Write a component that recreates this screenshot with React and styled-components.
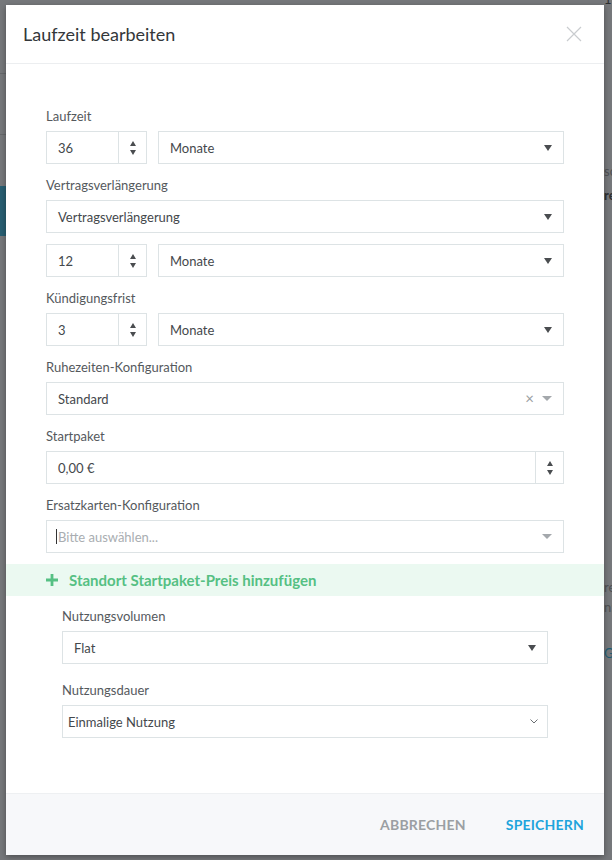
import React from "react";
import styled, { createGlobalStyle } from "styled-components";

const GlobalStyle = createGlobalStyle`
  html, body {
    margin: 0;
    padding: 0;
    height: 100%;
  }
  body {
    font-family: Lato, "Open Sans", Arial, sans-serif;
    background: #76787b;
    overflow: hidden;
  }
`;

const Page = styled.div`
  position: relative;
  width: 612px;
  height: 860px;
  background: #76787b;
  overflow: hidden;
  display: flex;
`;

const SideStrip = styled.div`
  width: 6px;
  display: flex;
  flex-direction: column;
`;

const StripLine = styled.div`
  height: ${(p) => p.h}px;
  border-bottom: 1px solid #66686b;
`;

const StripActive = styled.div`
  height: 50px;
  background: #285f72;
`;

const BackContent = styled.div`
  flex: 1;
  display: flex;
  justify-content: flex-end;
`;

const BackColumn = styled.div`
  width: 8px;
  display: flex;
  flex-direction: column;
  overflow: hidden;
  font-size: 13px;
  color: #4e5053;
  white-space: nowrap;
`;

const BackText = styled.div`
  margin-top: ${(p) => p.mt}px;
  font-weight: ${(p) => (p.bold ? 700 : 400)};
  color: ${(p) => p.color || "#505255"};
  line-height: 16px;
`;

const Modal = styled.div`
  position: absolute;
  top: 5px;
  left: 6px;
  width: 598px;
  height: 850px;
  background: #fff;
  box-shadow: 0 2px 6px rgba(0, 0, 0, 0.35);
  display: flex;
  flex-direction: column;
`;

const Header = styled.div`
  height: 59px;
  border-bottom: 1px solid #eceef0;
  display: flex;
  align-items: center;
  justify-content: space-between;
  padding: 0 22px 0 17px;
  box-sizing: border-box;
`;

const Title = styled.h2`
  margin: 0;
  font-size: 18px;
  font-weight: 400;
  color: #34373a;
`;

const Close = styled.button`
  border: 0;
  background: none;
  padding: 0;
  width: 16px;
  height: 16px;
  display: flex;
  cursor: pointer;
`;

const Body = styled.div`
  flex: 1;
  padding: 42px 40px 0;
  display: flex;
  flex-direction: column;
`;

const Field = styled.div`
  margin-bottom: ${(p) => p.mb ?? 11}px;
`;

const Label = styled.div`
  font-size: 13px;
  line-height: 20px;
  color: #55595d;
  margin-bottom: 5px;
`;

const Row = styled.div`
  display: flex;
  gap: 11px;
  margin-bottom: ${(p) => p.mb ?? 0}px;
`;

const Box = styled.div`
  box-sizing: border-box;
  height: 33px;
  border: 1px solid #dde3e5;
  background: #fff;
  display: flex;
  align-items: center;
  font-size: 13px;
  color: #44484c;
  width: ${(p) => (p.w ? `${p.w}px` : "auto")};
  flex: ${(p) => (p.w ? "none" : 1)};
`;

const Value = styled.div`
  flex: 1;
  padding-left: ${(p) => p.pl ?? 11}px;
  color: ${(p) => (p.placeholder ? "#a9adb1" : "#44484c")};
  display: flex;
  align-items: center;
`;

const Cursor = styled.span`
  display: inline-block;
  width: 1px;
  height: 15px;
  background: #333;
  margin-right: 1px;
`;

const Spinner = styled.div`
  width: 27px;
  height: 100%;
  border-left: 1px solid #dde3e5;
  display: flex;
  flex-direction: column;
  align-items: center;
  justify-content: center;
  gap: 4px;
`;

const Tri = styled.span`
  width: 0;
  height: 0;
  border-left: 3.5px solid transparent;
  border-right: 3.5px solid transparent;
  ${(p) =>
    p.up
      ? "border-bottom: 5px solid #4a4d50;"
      : "border-top: 5px solid #4a4d50;"}
`;

const Caret = styled.span`
  width: 0;
  height: 0;
  margin-right: ${(p) => p.mr ?? 11}px;
  border-left: ${(p) => p.size ?? 4}px solid transparent;
  border-right: ${(p) => p.size ?? 4}px solid transparent;
  border-top: ${(p) => (p.size ? p.size : 6)}px solid ${(p) => p.color || "#4a4d50"};
`;

const ClearX = styled.span`
  color: #9a9ea2;
  font-size: 15px;
  margin-right: 8px;
  line-height: 1;
`;

const Banner = styled.div`
  margin: 0 -40px;
  height: 32px;
  background: #ebf9f1;
  display: flex;
  align-items: center;
  padding-left: 40px;
  gap: 11px;
  font-size: 15px;
  font-weight: 700;
  color: #55c083;
`;

const SubSection = styled.div`
  padding: 10px 16px 0;
`;

const Chevron = styled.svg`
  margin-right: 9px;
`;

const Footer = styled.div`
  height: 61px;
  background: #f7f8fa;
  border-top: 1px solid #eef0f2;
  display: flex;
  align-items: center;
  justify-content: flex-end;
  padding: 0 20px 0 0;
  gap: 40px;
`;

const FooterButton = styled.button`
  border: 0;
  background: none;
  padding: 0;
  font-family: inherit;
  font-size: 14px;
  font-weight: 700;
  letter-spacing: 0.2px;
  color: ${(p) => (p.primary ? "#1ea4dc" : "#9b9fa3")};
  cursor: pointer;
`;

const NumberInput = ({ value, w = 101 }) => (
  <Box w={w}>
    <Value>{value}</Value>
    <Spinner>
      <Tri up />
      <Tri />
    </Spinner>
  </Box>
);

const Select = ({ value }) => (
  <Box>
    <Value>{value}</Value>
    <Caret />
  </Box>
);

export default function App() {
  return (
    <>
      <GlobalStyle />
      <Page>
        <SideStrip>
          <StripLine h={73} />
          <StripLine h={60} />
          <div style={{ height: 51 }} />
          <StripActive />
        </SideStrip>
        <BackContent>
          <BackColumn>
            <BackText mt={-9} color="#2c2e30">1-Gym</BackText>
            <BackText mt={156}>sc</BackText>
            <BackText mt={8} bold color="#2f3133">re</BackText>
            <BackText mt={376}>re</BackText>
            <BackText mt={4}>n:</BackText>
            <BackText mt={30} color="#1f5e74">G</BackText>
          </BackColumn>
        </BackContent>

        <Modal>
          <Header>
            <Title>Laufzeit bearbeiten</Title>
            <Close aria-label="Schließen">
              <svg width="16" height="16" viewBox="0 0 16 16">
                <path d="M1 1 L15 15 M15 1 L1 15" stroke="#c9cccf" strokeWidth="1.2" />
              </svg>
            </Close>
          </Header>

          <Body>
            <Field>
              <Label>Laufzeit</Label>
              <Row>
                <NumberInput value="36" />
                <Select value="Monate" />
              </Row>
            </Field>

            <Field>
              <Label>Vertragsverlängerung</Label>
              <Row mb={11}>
                <Select value="Vertragsverlängerung" />
              </Row>
              <Row>
                <NumberInput value="12" />
                <Select value="Monate" />
              </Row>
            </Field>

            <Field>
              <Label>Kündigungsfrist</Label>
              <Row>
                <NumberInput value="3" />
                <Select value="Monate" />
              </Row>
            </Field>

            <Field>
              <Label>Ruhezeiten-Konfiguration</Label>
              <Box>
                <Value>Standard</Value>
                <ClearX>×</ClearX>
                <Caret size={5} color="#a4a8ac" mr={11} />
              </Box>
            </Field>

            <Field>
              <Label>Startpaket</Label>
              <Box>
                <Value>0,00 €</Value>
                <Spinner>
                  <Tri up />
                  <Tri />
                </Spinner>
              </Box>
            </Field>

            <Field>
              <Label>Ersatzkarten-Konfiguration</Label>
              <Box>
                <Value placeholder="true" pl={9}>
                  <Cursor />
                  Bitte auswählen...
                </Value>
                <Caret size={5} color="#a4a8ac" mr={11} />
              </Box>
            </Field>

            <Banner>
              <svg width="12" height="12" viewBox="0 0 12 12">
                <path d="M6 0 V12 M0 6 H12" stroke="#55c083" strokeWidth="2.8" />
              </svg>
              Standort Startpaket-Preis hinzufügen
            </Banner>

            <SubSection>
              <Field mb={16}>
                <Label>Nutzungsvolumen</Label>
                <Select value="Flat" />
              </Field>
              <Field mb={0}>
                <Label>Nutzungsdauer</Label>
                <Box>
                  <Value pl={5}>Einmalige Nutzung</Value>
                  <Chevron width="8" height="5" viewBox="0 0 8 5">
                    <path d="M0.5 0.5 L4 4 L7.5 0.5" fill="none" stroke="#6a6e72" strokeWidth="1" />
                  </Chevron>
                </Box>
              </Field>
            </SubSection>
          </Body>

          <Footer>
            <FooterButton>ABBRECHEN</FooterButton>
            <FooterButton primary>SPEICHERN</FooterButton>
          </Footer>
        </Modal>
      </Page>
    </>
  );
}
